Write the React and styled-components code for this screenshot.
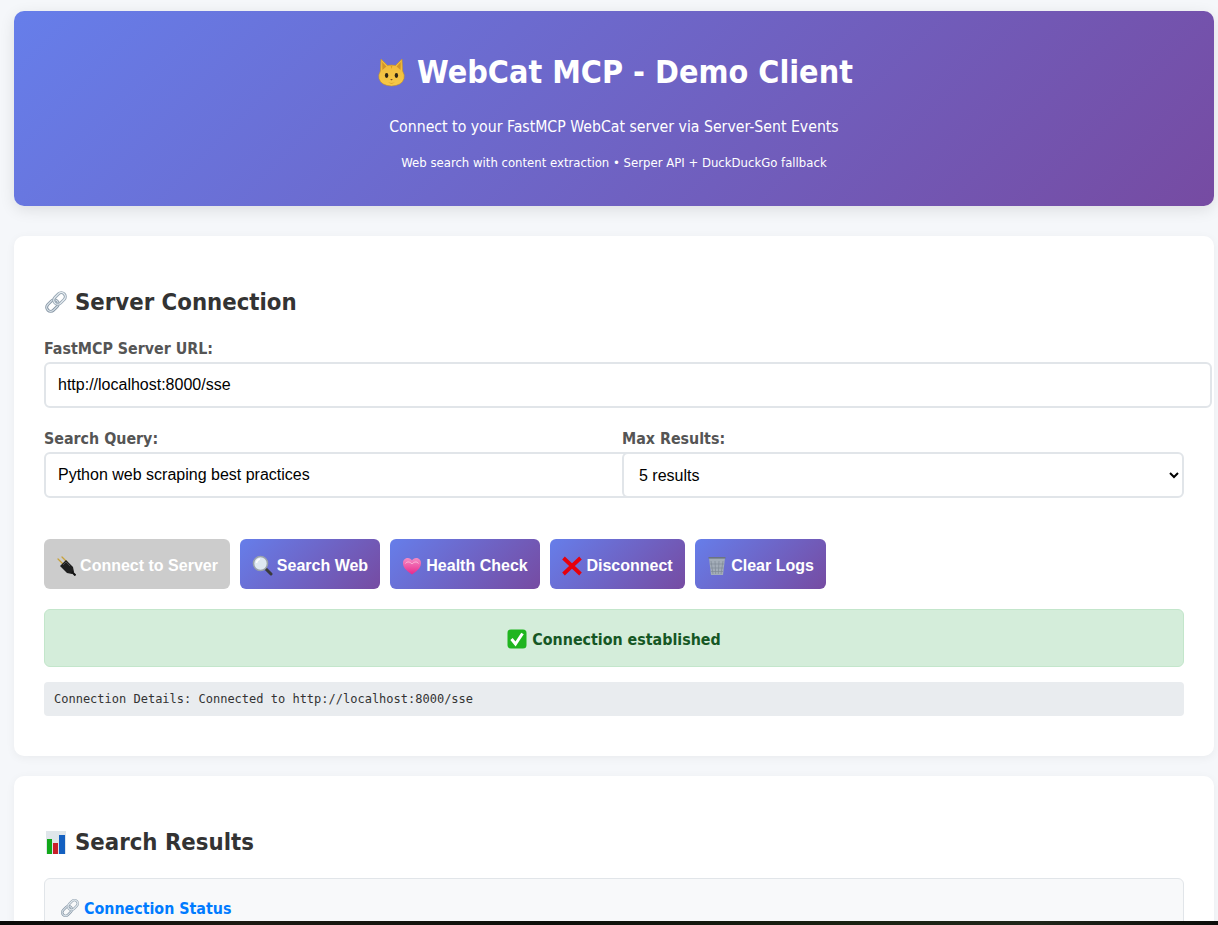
import React from 'react';
import styled, { createGlobalStyle } from 'styled-components';

const GlobalStyle = createGlobalStyle`
  html, body {
    margin: 0;
    height: 925px;
    overflow: hidden;
    background: #f5f7fa;
  }
  body {
    font-family: "DejaVu Sans Condensed", "DejaVu Sans", sans-serif;
    color: #333;
  }
`;

const Page = styled.div`
  width: 1200px;
  padding: 11px 0 0 14px;
`;

const Hero = styled.header`
  height: 195px;
  box-sizing: border-box;
  padding-top: 39px;
  border-radius: 10px;
  margin-bottom: 30px;
  text-align: center;
  color: #fff;
  background: linear-gradient(135deg, #667eea 0%, #764ba2 100%);
  box-shadow: 0 4px 15px rgba(0, 0, 0, 0.1);
`;

const Title = styled.h1`
  display: flex;
  justify-content: center;
  align-items: center;
  gap: 12px;
  margin: 0 0 23px;
  padding-left: 3px;
  height: 44px;
  font-size: 32px;
  font-weight: 700;
`;

const Tagline = styled.p`
  margin: 0 0 17px;
  font-size: 15.7px;
  line-height: 20px;
`;

const SubTagline = styled.p`
  margin: 0;
  font-size: 13px;
  line-height: 18px;
`;

const Card = styled.section`
  box-sizing: border-box;
  padding: 48px 30px 40px;
  border-radius: 10px;
  margin-bottom: 20px;
  background: #fff;
  box-shadow: 0 2px 10px rgba(0, 0, 0, 0.05);
`;

const Heading = styled.h2`
  display: flex;
  align-items: center;
  gap: 7px;
  margin: 0 0 ${(p) => p.$mb || '19px'};
  height: 36px;
  font-size: 23.7px;
  font-weight: 700;
  color: #333;
`;

const Label = styled.label`
  display: block;
  margin-bottom: 3px;
  height: 20px;
  line-height: 20px;
  font-size: 15.85px;
  font-weight: 700;
  color: #555;
`;

const Field = styled.div`
  margin-bottom: 21px;
`;

const TextInput = styled.input`
  display: block;
  width: 100%;
  height: 18px;
  padding: 12px;
  border: 2px solid #e1e5e9;
  border-radius: 6px;
  outline: none;
  background: #fff;
  font-family: "Liberation Sans", Arial, sans-serif;
  font-size: 16px;
  color: #000;
`;

const Columns = styled.div`
  display: grid;
  grid-template-columns: 578px 562px;
`;

const SelectBox = styled.select`
  position: relative;
  display: block;
  width: 100%;
  height: 46px;
  box-sizing: border-box;
  padding: 0 8px 0 11px;
  border: 2px solid #e1e5e9;
  border-radius: 6px;
  background: #fff;
  font-family: "Liberation Sans", Arial, sans-serif;
  font-size: 16px;
  color: #000;
`;

const Actions = styled.div`
  display: flex;
  gap: 10px;
  margin: 41px 0 20px;
`;

const Button = styled.button`
  display: flex;
  align-items: center;
  justify-content: center;
  gap: 4px;
  width: ${(p) => p.$w};
  height: 50px;
  padding: 3px 0 0;
  border: none;
  border-radius: 6px;
  font-family: "Liberation Sans", Arial, sans-serif;
  font-size: 16px;
  font-weight: 700;
  color: #fff;
  background: ${(p) => (p.disabled ? '#ccc' : 'linear-gradient(135deg, #667eea 0%, #764ba2 100%)')};
`;

const Status = styled.div`
  display: flex;
  align-items: center;
  justify-content: center;
  gap: 5px;
  height: 58px;
  box-sizing: border-box;
  padding-top: 2px;
  margin-bottom: 15px;
  border: 1px solid #c3e6cb;
  border-radius: 6px;
  background: #d4edda;
  color: #155724;
  font-size: 15.85px;
  font-weight: 700;
`;

const Details = styled.div`
  height: 34px;
  box-sizing: border-box;
  padding: 0 10px;
  border-radius: 4px;
  background: #e9ecef;
  font-family: "DejaVu Sans Mono", monospace;
  font-size: 12px;
  line-height: 34px;
  color: #333;
`;

const ResultItem = styled.div`
  height: 200px;
  box-sizing: border-box;
  padding: 18px 15px;
  border: 1px solid #e1e5e9;
  border-radius: 6px;
  background: #f8f9fa;
`;

const ResultTitle = styled.a`
  display: flex;
  align-items: center;
  gap: 4px;
  height: 22px;
  font-size: 15.85px;
  font-weight: 700;
  color: #007bff;
`;

const Wallpaper = styled.div`
  position: fixed;
  left: 0;
  right: 0;
  bottom: 0;
  height: 4px;
  background: linear-gradient(90deg, #0a0a08 0%, #1c1a12 20%, #0d0f0a 45%, #1a2212 70%, #20261a 85%, #0c0d0a 100%);
`;

const Emoji = styled.svg`
  flex: none;
  display: block;
`;

const Cat = () => (
  <Emoji width="27" height="29" viewBox="0 0 27 29">
    <defs>
      <linearGradient id="catFur" x1="0" y1="0" x2="0" y2="1">
        <stop offset="0" stopColor="#f0b93a" />
        <stop offset="1" stopColor="#f7c948" />
      </linearGradient>
    </defs>
    <path d="M3 1 L9.5 7.5 Q13.5 6.6 17.5 7.5 L24 1 L24.6 13 Q27 17 26 20.5 Q24 27.5 13.5 28 Q3 27.5 1 20.5 Q0 17 2.4 13 Z" fill="url(#catFur)" stroke="#c9941f" strokeWidth="0.6" />
    <path d="M4.2 4 L8.4 8.4 L4.4 12 Z M22.8 4 L18.6 8.4 L22.6 12 Z" fill="#d1952a" />
    <path d="M12.5 7.5 L13.5 11 L14.5 7.5 Z" fill="#d89a28" />
    <ellipse cx="8.6" cy="17.5" rx="1.7" ry="2.4" fill="#2e2415" />
    <ellipse cx="18.4" cy="17.5" rx="1.7" ry="2.4" fill="#2e2415" />
    <path d="M12.2 21 h2.6 l-1.3 1.6 Z" fill="#7a4a22" />
    <path d="M10 24 Q13.5 26 17 24 Q13.5 27.5 10 24" fill="#dd9c24" />
  </Emoji>
);

const ChainLink = ({ size = 24 }) => (
  <Emoji width={size} height={size} viewBox="0 0 24 24" fill="none">
    <g transform="rotate(-45 12 12)">
      <rect x="0.5" y="8" width="13" height="8" rx="4" stroke="#8796a5" strokeWidth="3" />
      <rect x="0.5" y="8" width="13" height="8" rx="4" stroke="#dbe4ea" strokeWidth="1.2" />
      <rect x="10.5" y="8" width="13" height="8" rx="4" stroke="#98a7b4" strokeWidth="3" />
      <rect x="10.5" y="8" width="13" height="8" rx="4" stroke="#eaf0f4" strokeWidth="1.2" />
    </g>
  </Emoji>
);

const Plug = () => (
  <Emoji width="20" height="20" viewBox="0 0 20 20">
    <path d="M2 3 L8 9 M6 1 L11 6" stroke="#c9a23a" strokeWidth="1.3" strokeLinecap="round" />
    <path d="M4 10 L10 4 L17 11 L18 16 L16 18 L11 17 Z" fill="#1e1e1e" />
    <path d="M7 9 L10 6 L14 10" stroke="#555" strokeWidth="0.8" fill="none" />
    <path d="M16 16 L19.5 19.5" stroke="#111" strokeWidth="2" />
  </Emoji>
);

const Magnifier = () => (
  <Emoji width="21" height="21" viewBox="0 0 21 21">
    <path d="M13.5 13.5 L19 19" stroke="#3a3a3a" strokeWidth="3" strokeLinecap="round" />
    <circle cx="8.5" cy="8.5" r="7" fill="#dfe9f2" stroke="#9aa3ab" strokeWidth="1.6" />
    <path d="M4.5 8 A4.5 4.5 0 0 1 8 4" stroke="#fff" strokeWidth="1.5" fill="none" />
  </Emoji>
);

const Heart = () => (
  <Emoji width="20" height="20" viewBox="0 0 20 20">
    <defs>
      <linearGradient id="heartFill" x1="0" y1="0" x2="0" y2="1">
        <stop offset="0" stopColor="#f58cc4" />
        <stop offset="1" stopColor="#e8288c" />
      </linearGradient>
    </defs>
    <path d="M10 18.5 C3 14 1 10.5 1 7 C1 3.5 3.5 2 5.8 2 C7.6 2 9.2 3 10 4.6 C10.8 3 12.4 2 14.2 2 C16.5 2 19 3.5 19 7 C19 10.5 17 14 10 18.5 Z" fill="url(#heartFill)" />
    <path d="M3.5 7.5 C5 5.2 8 5.6 10 8 C12 5.6 15 5.2 16.5 7.5" stroke="#fcc8e2" strokeWidth="0.8" fill="none" />
  </Emoji>
);

const Cross = () => (
  <Emoji width="20" height="20" viewBox="0 0 20 20">
    <path d="M1.5 2 L18.5 18 M18.5 2 L1.5 18" stroke="#e8000b" strokeWidth="3.8" />
  </Emoji>
);

const Trash = () => (
  <Emoji width="20" height="21" viewBox="0 0 20 21">
    <path d="M2 3 H18 L16 20 H4 Z" fill="#a3adb8" />
    <path d="M4 6 L6 19 M8 6 L8.7 19 M12 6 L11.3 19 M16 6 L14 19 M3 9 H17 M3.5 13 H16.5 M4 16.5 H16" stroke="#7f8a97" strokeWidth="0.7" />
    <rect x="1.5" y="2" width="17" height="1.6" fill="#6b7480" />
  </Emoji>
);

const Check = () => (
  <Emoji width="20" height="20" viewBox="0 0 20 20">
    <rect x="0.5" y="0.5" width="19" height="19" rx="3.5" fill="#1fb51f" />
    <path d="M4.5 10 L8.5 15 L15.5 4.5" stroke="#fff" strokeWidth="3" fill="none" />
  </Emoji>
);

const Chart = () => (
  <Emoji width="24" height="24" viewBox="0 0 24 24">
    <rect x="2" y="1" width="20" height="23" fill="#dfe6ea" />
    <rect x="3" y="9" width="5" height="15" fill="#12a81a" />
    <rect x="9" y="13" width="5" height="11" fill="#c8202a" />
    <rect x="15" y="5" width="6" height="19" fill="#1460c0" />
  </Emoji>
);

const buttons = [
  { label: 'Connect to Server', icon: <Plug />, w: '186px', disabled: true },
  { label: 'Search Web', icon: <Magnifier />, w: '140px' },
  { label: 'Health Check', icon: <Heart />, w: '150px' },
  { label: 'Disconnect', icon: <Cross />, w: '135px' },
  { label: 'Clear Logs', icon: <Trash />, w: '131px' },
];

export default function App() {
  return (
    <Page>
      <GlobalStyle />
      <Hero>
        <Title>
          <Cat />
          WebCat MCP - Demo Client
        </Title>
        <Tagline>Connect to your FastMCP WebCat server via Server-Sent Events</Tagline>
        <SubTagline>Web search with content extraction • Serper API + DuckDuckGo fallback</SubTagline>
      </Hero>

      <Card>
        <Heading>
          <ChainLink />
          Server Connection
        </Heading>
        <Field>
          <Label>FastMCP Server URL:</Label>
          <TextInput defaultValue="http://localhost:8000/sse" />
        </Field>
        <Columns>
          <div>
            <Label>Search Query:</Label>
            <TextInput defaultValue="Python web scraping best practices" />
          </div>
          <div>
            <Label>Max Results:</Label>
            <SelectBox defaultValue="5">
              <option value="3">3 results</option>
              <option value="5">5 results</option>
              <option value="10">10 results</option>
            </SelectBox>
          </div>
        </Columns>
        <Actions>
          {buttons.map((b) => (
            <Button key={b.label} $w={b.w} disabled={b.disabled}>
              {b.icon}
              {b.label}
            </Button>
          ))}
        </Actions>
        <Status>
          <Check />
          Connection established
        </Status>
        <Details>Connection Details: Connected to http://localhost:8000/sse</Details>
      </Card>

      <Card>
        <Heading $mb="18px">
          <Chart />
          Search Results
        </Heading>
        <ResultItem>
          <ResultTitle>
            <ChainLink size={20} />
            Connection Status
          </ResultTitle>
        </ResultItem>
      </Card>
      <Wallpaper />
    </Page>
  );
}
